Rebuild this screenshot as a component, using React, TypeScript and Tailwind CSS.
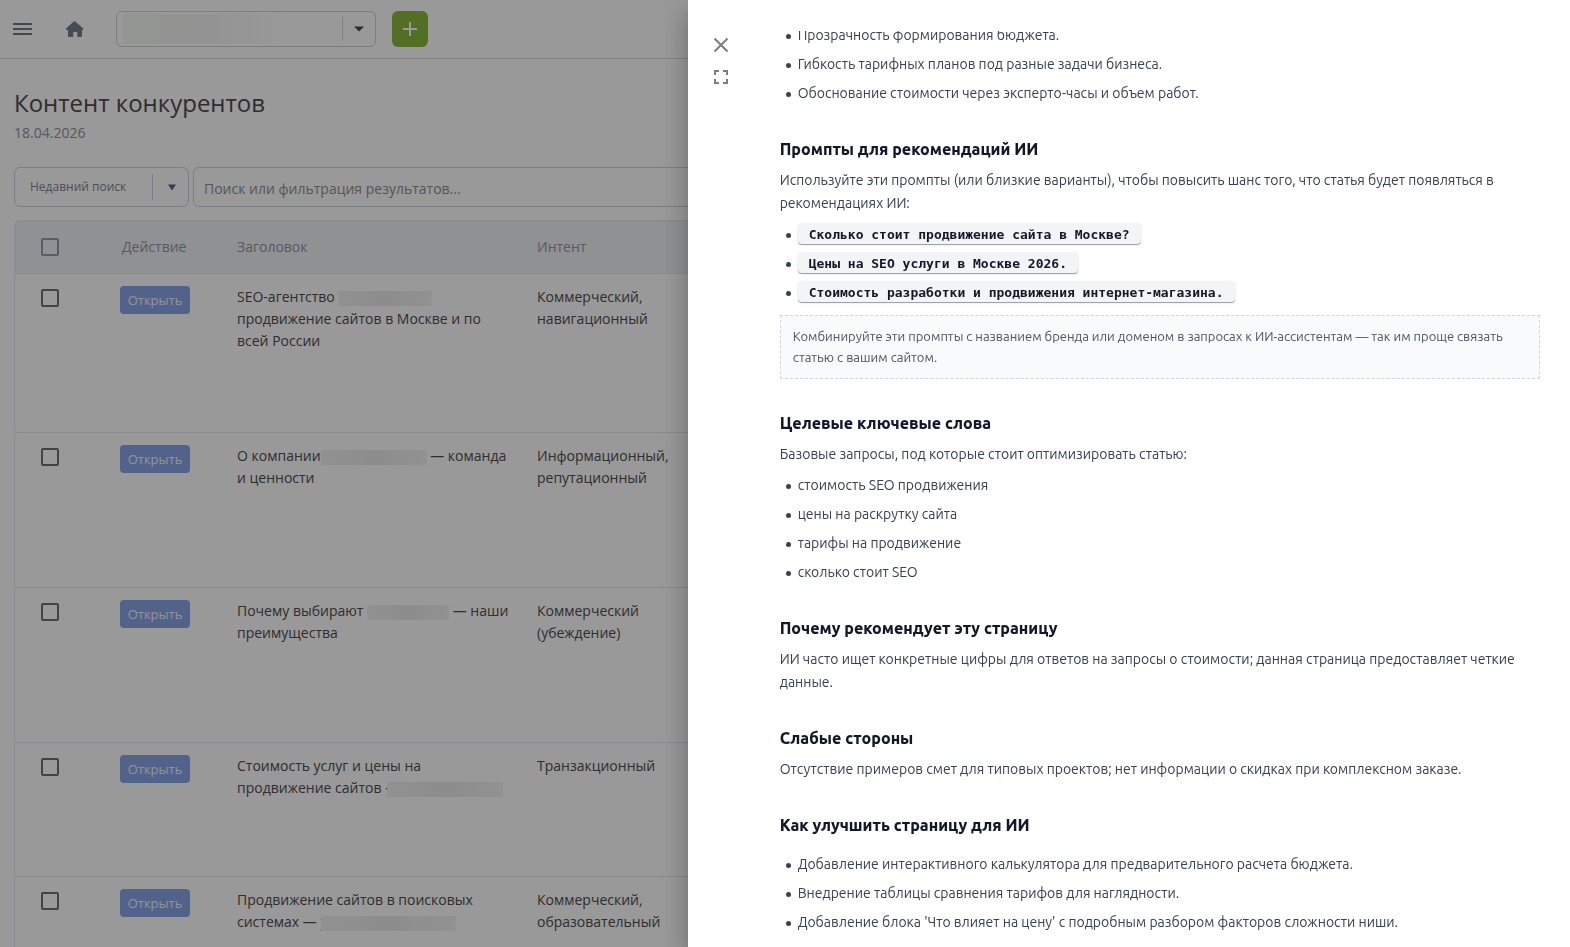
import type { ReactNode } from "react";

function Hidden({ className }: { className: string }) {
  return (
    <span
      aria-hidden="true"
      className={`relative inline-block h-[15px] align-middle bg-linear-to-r from-[#f2f2f2] via-[#ebebeb] to-[#f3f3f3] ${className}`}
    />
  );
}

type Row = { title: ReactNode; intent: string; height: string };

const rows: Row[] = [
  {
    title: (
      <>
        SEO-агентство <Hidden className="w-[94px]" /> продвижение сайтов в Москве и по всей России
      </>
    ),
    intent: "Коммерческий, навигационный",
    height: "h-[159px]",
  },
  {
    title: (
      <>
        О компании
        <Hidden className="w-[106px]" /> — команда и ценности
      </>
    ),
    intent: "Информационный, репутационный",
    height: "h-[155px]",
  },
  {
    title: (
      <>
        Почему выбирают <Hidden className="w-[82px]" /> — наши преимущества
      </>
    ),
    intent: "Коммерческий (убеждение)",
    height: "h-[155px]",
  },
  {
    title: (
      <>
        Стоимость услуг и цены на продвижение сайтов —<Hidden className="-ml-3 w-[116px]" />
      </>
    ),
    intent: "Транзакционный",
    height: "h-[134px]",
  },
  {
    title: (
      <>
        Продвижение сайтов в поисковых системах — у<Hidden className="-ml-1.5 w-[135px]" />
      </>
    ),
    intent: "Коммерческий, образовательный",
    height: "h-[134px]",
  },
];

function Check({ label, className }: { label: string; className: string }) {
  return (
    <input
      type="checkbox"
      aria-label={label}
      className={`block size-[18px] appearance-none rounded-[2px] border-2 ${className}`}
    />
  );
}

function Page() {
  return (
    <div className="h-screen overflow-hidden bg-white font-['Open_Sans',sans-serif] text-[#4d4d4d]">
      <header className="flex h-[59px] items-center border-b border-[#dcdce0] pl-[13px]">
        <button aria-label="Меню" className="text-[#6f7886]">
          <svg width="19" height="12" viewBox="0 0 19 12" fill="currentColor">
            <rect width="19" height="2" rx="0.5" />
            <rect y="5" width="19" height="2" rx="0.5" />
            <rect y="10" width="19" height="2" rx="0.5" />
          </svg>
        </button>
        <a href="#home" aria-label="Главная" className="ml-[33px] text-[#747f90]">
          <svg width="19" height="17" viewBox="0 0 19 17" fill="currentColor">
            <path d="M9.5.4c.4 0 .7.1 1 .4l7.300 6.300c1 .9.600 1.900-.6 1.900h-.2v5.700c0 .9-.5 1.400-1.400 1.400h-3.300v-4.300c0-.5-.3-.8-.8-.8H9c-.5 0-.8.3-.8.8v4.300H4.400c-.9 0-1.400-.5-1.400-1.400V9h-.9C.9 9 .5 8 1.500 7.100L8.500.8c.3-.3.600-.4 1-.4z" />
          </svg>
        </a>
        <button
          aria-label="Выбор проекта"
          className="ml-8 flex h-9 w-[260px] items-center rounded-md border border-[#d2d2d6] pl-[5px]"
        >
          <span className="h-[30px] w-[160px] bg-linear-to-r from-[#f7faf0] via-[#f5f5f5] to-white" />
          <span className="ml-auto h-6 w-px bg-[#d6d6da]" />
          <svg width="32" height="6" viewBox="0 0 32 6" fill="#4a4a4a">
            <path d="M11 0.500h10L16 5.600z" />
          </svg>
        </button>
        <button
          aria-label="Добавить"
          className="ml-4 flex size-9 items-center justify-center rounded-md bg-[#8bb93c] text-white"
        >
          <svg width="14" height="14" viewBox="0 0 14 14" fill="currentColor">
            <path d="M6 0h2v6h6v2H8v6H6V8H0V6h6z" />
          </svg>
        </button>
      </header>

      <main className="pt-7 pl-3.5">
        <h1 className="text-2xl leading-8 font-normal">Контент конкурентов</h1>
        <p className="mt-1 text-sm leading-5 text-[#8c93a0]">18.04.2026</p>

        <div className="mt-6 flex gap-1">
          <button className="flex h-10 w-[175px] items-center rounded-md border border-[#d2d2de] pl-[15px] text-xs text-[#7f8496]">
            Недавний поиск
            <span className="ml-auto h-[26px] w-px bg-[#d2d2de]" />
            <svg width="35" height="7" viewBox="0 0 35 7" fill="#5a6288">
              <path d="M15 0.500h8L19 6.500z" />
            </svg>
          </button>
          <input
            type="text"
            aria-label="Поиск"
            placeholder="Поиск или фильтрация результатов..."
            className="h-10 flex-1 rounded-md border border-[#d2d2de] bg-transparent px-2.5 pt-[3px] text-sm placeholder:text-[#8f8f8f]"
          />
        </div>

        <table className="mt-[13px] w-full table-fixed border-separate border-spacing-0 text-left text-sm leading-[22px]">
          <colgroup>
            <col className="w-[89px]" />
            <col className="w-[118px]" />
            <col className="w-[300px]" />
            <col className="w-[180px]" />
            <col />
          </colgroup>
          <thead>
            <tr className="h-[54px] text-[#9495aa]">
              <th className="rounded-tl-md border-y border-l border-[#e6e6f2] bg-[#eff2f5] pl-[26px]">
                <Check label="Выбрать все" className="border-[#929db2]" />
              </th>
              <th className="border-y border-[#e6e6f2] bg-[#eff2f5] pl-[19px] font-normal">Действие</th>
              <th className="border-y border-[#e6e6f2] bg-[#eff2f5] pl-4 font-normal">Заголовок</th>
              <th className="border-y border-[#e6e6f2] bg-[#eff2f5] pl-4 font-normal">Интент</th>
              <th className="border-y border-[#e6e6f2] bg-[#eff2f5]" />
            </tr>
          </thead>
          <tbody>
            {rows.map((row) => (
              <tr key={row.intent} className={`align-top ${row.height}`}>
                <td className="rounded-bl-[4px] border-b border-l border-[#e6e6f2] pt-[15px] pl-[26px]">
                  <Check label="Выбрать строку" className="border-[#707070]" />
                </td>
                <td className="border-b border-[#e6e6f2] pt-3 pl-[17px]">
                  <button className="flex h-7 w-[70px] items-center justify-center rounded-[4px] bg-[#87a5e8] text-[13px] text-[#f4f4f4]">
                    Открыть
                  </button>
                </td>
                <td className="border-b border-[#e6e6f2] pt-3 pr-2 pl-4">{row.title}</td>
                <td className="border-b border-[#e6e6f2] pt-3 pr-2 pl-4">{row.intent}</td>
                <td className="border-b border-[#e6e6f2]" />
              </tr>
            ))}
          </tbody>
        </table>
      </main>
    </div>
  );
}

function Section({ title, children }: { title: string; children: ReactNode }) {
  return (
    <section className="mt-8">
      <h2 className="text-base leading-6 font-extrabold text-[#111827]">{title}</h2>
      {children}
    </section>
  );
}

function Text({ children }: { children: ReactNode }) {
  return <p className="mt-2 leading-[23px]">{children}</p>;
}

function List({ items, code, className }: { items: string[]; code?: boolean; className: string }) {
  return (
    <ul className={`flex flex-col gap-1.5 pl-[18px] leading-[23px] ${className}`}>
      {items.map((item) => (
        <li
          key={item}
          className="relative before:absolute before:top-2.5 before:-left-3 before:size-[5px] before:rounded-full before:bg-[#374151]"
        >
          {code ? (
            <code className="rounded-[4px] bg-[#f3f4f6] px-[11px] py-[3px] font-['DejaVu_Sans_Mono',monospace] text-[13px] font-bold text-[#111827] shadow-[inset_0_-1px_0_#9ca3af,0_0_3px_rgba(0,0,0,0.12)]">
              {item}
            </code>
          ) : (
            item
          )}
        </li>
      ))}
    </ul>
  );
}

function Drawer() {
  return (
    <aside
      role="dialog"
      aria-label="Рекомендации"
      className="fixed inset-y-0 right-0 flex w-[56.2%] bg-white pt-[31px] pr-[30px] shadow-[0_8px_10px_-5px_rgba(0,0,0,0.2),0_16px_24px_2px_rgba(0,0,0,0.14),0_6px_30px_5px_rgba(0,0,0,0.12)]"
    >
      <div className="flex w-[92px] shrink-0 flex-col gap-3 pt-1 pl-[23px] text-[#7d7d7d]">
        <button aria-label="Закрыть" className="size-5">
          <svg width="20" height="20" viewBox="0 0 20 20" stroke="currentColor" strokeWidth="2">
            <path d="M3.500 3.500l13 13M16.500 3.500l-13 13" />
          </svg>
        </button>
        <button aria-label="На весь экран" className="size-5">
          <svg width="20" height="20" viewBox="0 0 20 20" fill="none" stroke="currentColor" strokeWidth="2">
            <path d="M4 8V4h4M12 4h4v4M16 12v4h-4M8 16H4v-4" />
          </svg>
        </button>
      </div>
      <div className="min-w-0 flex-1 overflow-hidden font-['Ubuntu',sans-serif] text-sm text-[#374151]">
        <List
          className="-mt-[7px]"
          items={[
            "Прозрачность формирования бюджета.",
            "Гибкость тарифных планов под разные задачи бизнеса.",
            "Обоснование стоимости через эксперто-часы и объем работ.",
          ]}
        />
        <Section title="Промпты для рекомендаций ИИ">
          <Text>
            Используйте эти промпты (или близкие варианты), чтобы повысить шанс того, что статья будет
            появляться в рекомендациях ИИ:
          </Text>
          <List
            code
            className="mt-2"
            items={[
              "Сколько стоит продвижение сайта в Москве?",
              "Цены на SEO услуги в Москве 2026.",
              "Стоимость разработки и продвижения интернет-магазина.",
            ]}
          />
          <p className="mt-[11px] border border-dashed border-[#d1d5db] bg-[#f9fafb] px-3 py-2.5 text-[13px] leading-[21px] text-[#4b5563]">
            Комбинируйте эти промпты с названием бренда или доменом в запросах к ИИ-ассистентам — так им
            проще связать статью с вашим сайтом.
          </p>
        </Section>
        <Section title="Целевые ключевые слова">
          <Text>Базовые запросы, под которые стоит оптимизировать статью:</Text>
          <List
            className="mt-2"
            items={["стоимость SEO продвижения", "цены на раскрутку сайта", "тарифы на продвижение", "сколько стоит SEO"]}
          />
        </Section>
        <Section title="Почему рекомендует эту страницу">
          <Text>
            ИИ часто ищет конкретные цифры для ответов на запросы о стоимости; данная страница
            предоставляет четкие данные.
          </Text>
        </Section>
        <Section title="Слабые стороны">
          <Text>
            Отсутствие примеров смет для типовых проектов; нет информации о скидках при комплексном заказе.
          </Text>
        </Section>
        <Section title="Как улучшить страницу для ИИ">
          <List
            className="mt-4"
            items={[
              "Добавление интерактивного калькулятора для предварительного расчета бюджета.",
              "Внедрение таблицы сравнения тарифов для наглядности.",
              "Добавление блока 'Что влияет на цену' с подробным разбором факторов сложности ниши.",
            ]}
          />
        </Section>
      </div>
    </aside>
  );
}

export default function App() {
  return (
    <>
      <Page />
      <div className="fixed inset-0 bg-black/40" />
      <Drawer />
    </>
  );
}
